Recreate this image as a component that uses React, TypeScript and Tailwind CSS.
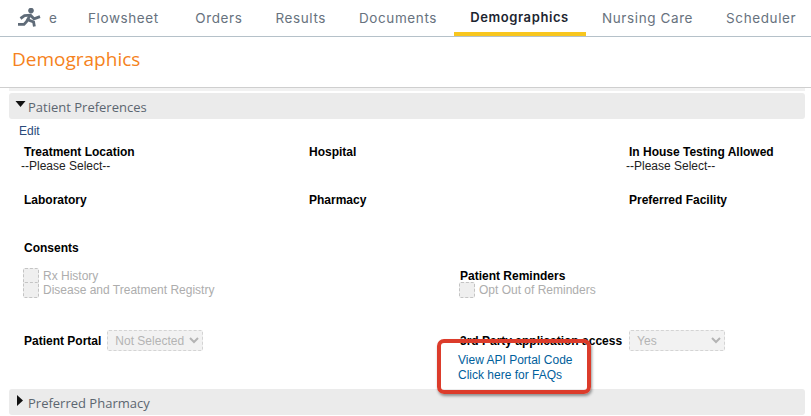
const tabs = ["Flowsheet", "Orders", "Results", "Documents", "Demographics", "Nursing Care", "Scheduler"];

function Runner() {
  return (
    <svg width="24" height="20" viewBox="17 6 24 20" fill="none" stroke="#5f6b78" strokeWidth="2.8">
      <circle cx="31" cy="8.6" r="2.8" fill="#5f6b78" stroke="none" />
      <path d="M20.5 16.5 L24.5 13.6 L30.5 13.2 L34 16.8 L40 14.6" />
      <path d="M30 13.4 L26.5 19.6 L24 22.4 L18 22.4" />
      <path d="M27.5 17.6 L33.6 20 L34.4 24.6" />
    </svg>
  );
}

function Check({ label }: { label: string }) {
  return (
    <div className="flex items-center h-[14px] text-[#adadad]">
      <span className="w-[16px] h-[16px] shrink-0 mr-[4px] rounded-[2px] border border-dashed border-[#c4c4c4] bg-[#efefef]" />
      {label}
    </div>
  );
}

function FakeSelect({ label, w }: { label: string; w: string }) {
  return (
    <div className={`${w} h-[21px] flex items-center justify-between pl-[7px] pr-[3px] border border-dashed border-[#d4d4d4] bg-[#f2f2f2] rounded-[2px] text-[#b4b4b4]`}>
      {label}
      <svg width="10" height="7" viewBox="0 0 10 7" fill="none" stroke="#b4b4b4" strokeWidth="2"><path d="M1 1 L5 5 L9 1" /></svg>
    </div>
  );
}

function Bar({ label, open }: { label: string; open?: boolean }) {
  return (
    <div className="ml-[9px] mr-[6px] h-[26px] bg-[#ebebeb] rounded-[3px] flex items-center pl-[6px] pt-[1px] text-[13px] text-[#5c6670] [font-family:'Open_Sans',sans-serif]">
      <svg width="11" height="11" viewBox="0 0 11 11" className="mr-[2px] -mt-[5px]" fill="#111">
        {open ? <path d="M0.5 2 H10.5 L5.5 8 Z" /> : <path d="M2 0 L8 5.5 L2 11 Z" />}
      </svg>
      {label}
    </div>
  );
}

export default function App() {
  return (
    <div className="relative w-[811px] h-[416px] overflow-hidden bg-white text-[12px] leading-[14px] text-black [font-family:'Liberation_Sans',Arial,sans-serif]">
      <nav className="h-[37px] border-b border-[#b5c1c9] flex whitespace-nowrap [font-family:Inter,sans-serif] text-[13.5px] tracking-[0.6px] text-[#67727e]">
        <div className="w-[72px] shrink-0 pl-[17px] flex items-center gap-[8px] pb-[1px]">
          <Runner />
          <span>e</span>
        </div>
        {tabs.map((t) => (
          <div
            key={t}
            className={
              t === "Demographics"
                ? "w-[132px] shrink-0 h-[36px] flex items-center justify-center border-b-[4px] border-[#f8c61e] text-[#1c2530] font-semibold text-[13px] pt-[2px]"
                : t === "Flowsheet"
                  ? "shrink-0 h-[36px] pl-[16px] pr-[20px] flex items-center pb-[1px]"
                  : "shrink-0 h-[36px] px-[16.5px] flex items-center pb-[1px]"
            }
          >
            {t}
          </div>
        ))}
      </nav>
      <div className="h-[51px] border-b border-[#cfcfcf] pl-[12px] pt-[10px] text-[19px] leading-[24px] text-[#f58220] [font-family:'Open_Sans',sans-serif]">
        Demographics
      </div>
      <div className="ml-[9px] mr-[6px] h-[3px] bg-[#f1f1f1] mb-[2px]" />
      <Bar label="Patient Preferences" open />
      <div className="pl-[19px] pt-[5px] h-[19px] text-[#2a4a7a]">Edit</div>
      <div className="grid grid-cols-[24px_285px_151px_169px_1fr] mt-[7px]">
        <div className="col-start-2 font-bold">Treatment Location</div>
        <div className="col-start-3 col-span-2 font-bold">Hospital</div>
        <div className="col-start-5 font-bold">In House Testing Allowed</div>
        <div className="col-start-2 -ml-[3px] text-[#222]">--Please Select--</div>
        <div className="col-start-5 -ml-[3px] text-[#222]">--Please Select--</div>
        <div className="col-start-2 font-bold mt-[20px] h-[48px]">Laboratory</div>
        <div className="col-start-3 col-span-2 font-bold mt-[20px]">Pharmacy</div>
        <div className="col-start-5 font-bold mt-[20px]">Preferred Facility</div>
        <div className="col-start-2 font-bold h-[21px]">Consents</div>
        <div className="col-start-2 col-span-4 grid grid-cols-[436px_1fr] h-[68px]">
          <div className="pt-[7px] -ml-px">
            <Check label="Rx History" />
            <Check label="Disease and Treatment Registry" />
          </div>
          <div>
            <div className="font-bold pt-[7px]">Patient Reminders</div>
            <div className="-ml-px"><Check label="Opt Out of Reminders" /></div>
          </div>
        </div>
        <div className="col-start-2 col-span-4 grid grid-cols-[436px_1fr] h-[59px]">
          <div className="flex items-start gap-[6px]">
            <span className="font-bold pt-[4px]">Patient Portal</span>
            <FakeSelect label="Not Selected" w="w-[96px]" />
          </div>
          <div>
            <div className="flex items-start gap-[7px]">
              <span className="font-bold pt-[4px]">3rd Party application access</span>
              <FakeSelect label="Yes" w="w-[96px]" />
            </div>
            <div className="text-[#00609c] -ml-[2px] mt-[2px] leading-[15px]">
              <div>View API Portal Code</div>
              <div>Click here for FAQs</div>
            </div>
          </div>
        </div>
      </div>
      <Bar label="Preferred Pharmacy" />
      <div className="absolute left-[437px] top-[339px] w-[154px] h-[55px] rounded-[7px] border-[4px] border-[#dc3c2b] shadow-[1px_2px_3px_rgba(0,0,0,0.4)]" />
    </div>
  );
}
